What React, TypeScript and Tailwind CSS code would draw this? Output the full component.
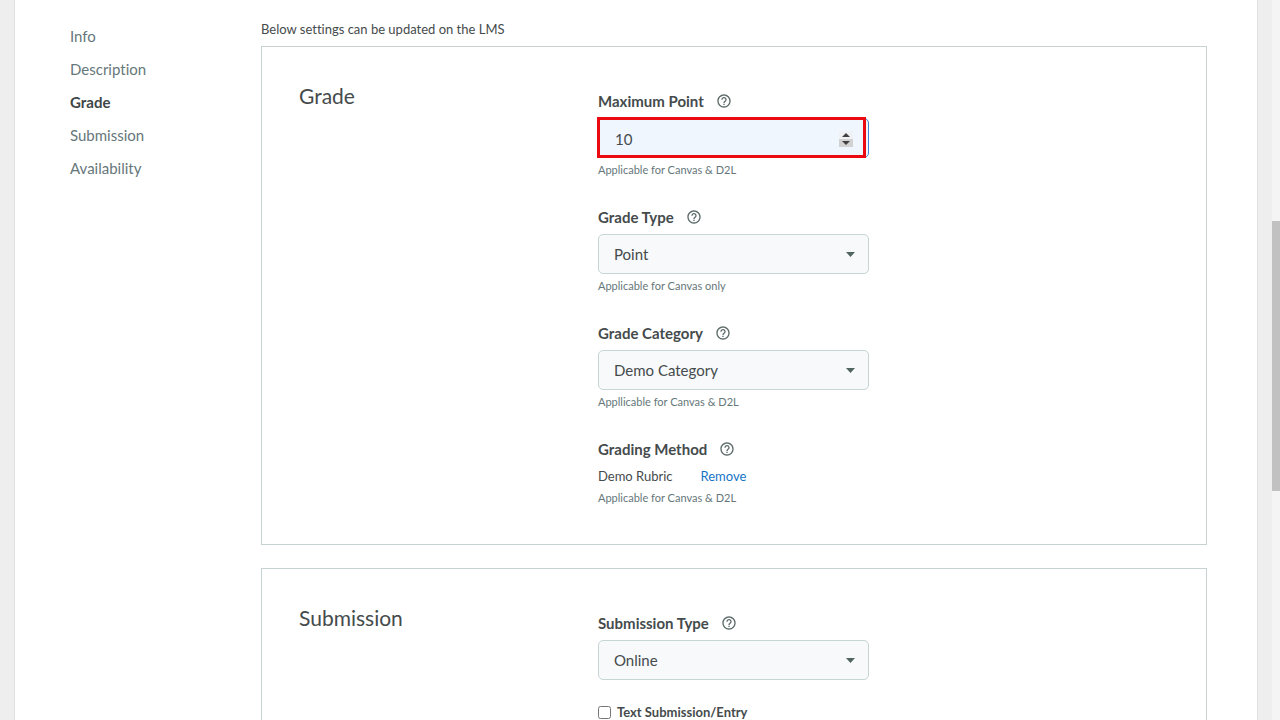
import { useState } from "react";
import type { ReactNode } from "react";
import { MdHelpOutline } from "react-icons/md";

const navItems = ["Info", "Description", "Grade", "Submission", "Availability"];

function FieldLabel({ htmlFor, children }: { htmlFor?: string; children: ReactNode }) {
  return (
    <div className="flex h-5 items-center gap-3">
      {htmlFor ? (
        <label htmlFor={htmlFor} className="text-[15px] leading-5 font-bold">
          {children}
        </label>
      ) : (
        <span className="text-[15px] leading-5 font-bold">{children}</span>
      )}
      <button type="button" aria-label="Help" className="text-[#5c6b69]">
        <MdHelpOutline size={16} />
      </button>
    </div>
  );
}

function Hint({ children }: { children: ReactNode }) {
  return <p className="mt-1 text-[11px] leading-4 text-[#66777a]">{children}</p>;
}

function SelectField({ id, label, value, hint }: { id: string; label: string; value: string; hint?: string }) {
  return (
    <div>
      <FieldLabel htmlFor={id}>{label}</FieldLabel>
      <div className="relative mt-[7px] w-[271px]">
        <select
          id={id}
          className="block h-10 w-full appearance-none rounded-[5px] border border-[#c7d6d4] bg-[#f7f9fb] pr-8 pl-[15px] text-[15px] text-[#454b4c]"
        >
          <option>{value}</option>
        </select>
        <svg
          className="pointer-events-none absolute top-[18px] right-3.5 h-[5px] w-[9px] fill-[#506461]"
          viewBox="0 0 9 5"
          aria-hidden="true"
        >
          <path d="M0 0h9L4.5 5z" />
        </svg>
      </div>
      {hint && <Hint>{hint}</Hint>}
    </div>
  );
}

function MaximumPoint() {
  const [points, setPoints] = useState(10);
  return (
    <div>
      <FieldLabel htmlFor="points">Maximum Point</FieldLabel>
      <div className="relative mt-[7px] w-[271px]">
        <input
          id="points"
          type="number"
          value={points}
          onChange={(e) => setPoints(Number(e.target.value))}
          className="block h-10 w-full [appearance:textfield] rounded-[5px] border border-[#3f86d0] bg-[#eff6fe] pt-0.5 pr-10 pl-4 text-[15px] text-[#454b4c] outline-none"
        />
        <div className="absolute top-[13px] right-4 flex w-3.5 flex-col">
          <button
            type="button"
            aria-label="Increase"
            onClick={() => setPoints(points + 1)}
            className="flex h-2 items-center justify-center bg-[#eff1f4]"
          >
            <svg className="h-1 w-2 fill-[#404040]" viewBox="0 0 8 4">
              <path d="M0 4h8L4 0z" />
            </svg>
          </button>
          <button
            type="button"
            aria-label="Decrease"
            onClick={() => setPoints(points - 1)}
            className="flex h-2 items-center justify-center bg-[#d2d2d2]"
          >
            <svg className="h-1 w-2 fill-[#404040]" viewBox="0 0 8 4">
              <path d="M0 0h8L4 4z" />
            </svg>
          </button>
        </div>
        <div className="pointer-events-none absolute -top-px right-[3px] bottom-0 -left-px border-3 border-[#ea0a10]" />
      </div>
      <Hint>Applicable for Canvas &amp; D2L</Hint>
    </div>
  );
}

function Card({ title, children }: { title: string; children: ReactNode }) {
  return (
    <section className="flex border border-[#c7d3d3] pt-11 pb-[38px] pl-[37px]">
      <h2 className="-mt-2.5 w-[299px] shrink-0 text-[21px] leading-[30px]">{title}</h2>
      <div className="flex min-w-0 flex-1 flex-col gap-[29px]">{children}</div>
    </section>
  );
}

export default function App() {
  return (
    <div className="flex h-screen overflow-hidden bg-[#eeeeee] font-['Lato',sans-serif] text-[#454b4c] [font-variant-ligatures:none]">
      <div className="mr-3.5 ml-3.5 flex min-w-0 flex-1 items-start border-x border-[#e2e2e2] bg-white pr-[50px] pl-[55px]">
        <nav className="w-[191px] shrink-0 pt-5">
          <ul>
            {navItems.map((item) => (
              <li key={item} className="h-[33px]">
                <a
                  href={`#${item.toLowerCase()}`}
                  className={
                    item === "Grade"
                      ? "text-[15px] leading-[33px] font-bold text-[#3e4647]"
                      : "text-[15px] leading-[33px] text-[#66777a]"
                  }
                >
                  {item}
                </a>
              </li>
            ))}
          </ul>
        </nav>
        <main className="min-w-0 flex-1 pt-[19px]">
          <p className="mb-[7px] text-[13px] leading-5">Below settings can be updated on the LMS</p>
          <div className="flex flex-col gap-[23px]">
            <Card title="Grade">
              <MaximumPoint />
              <SelectField id="grade-type" label="Grade Type" value="Point" hint="Applicable for Canvas only" />
              <SelectField
                id="grade-category"
                label="Grade Category"
                value="Demo Category"
                hint="Appllicable for Canvas & D2L"
              />
              <div>
                <FieldLabel>Grading Method</FieldLabel>
                <div className="mt-[7px] flex gap-7 text-[13px] leading-5">
                  <span>Demo Rubric</span>
                  <button type="button" className="text-[#1674c6]">
                    Remove
                  </button>
                </div>
                <Hint>Applicable for Canvas &amp; D2L</Hint>
              </div>
            </Card>
            <Card title="Submission">
              <SelectField id="submission-type" label="Submission Type" value="Online" />
              <div className="-mt-[7px] flex h-5 items-center gap-1.5">
                <input id="text-entry" type="checkbox" className="m-0 size-[13px]" />
                <label htmlFor="text-entry" className="text-[13px] leading-5 font-bold">
                  Text Submission/Entry
                </label>
              </div>
            </Card>
          </div>
        </main>
      </div>
      <div className="h-full w-2 shrink-0 bg-[#f4f4f4] pt-[221px]" aria-hidden="true">
        <div className="h-[270px] bg-[#c1c1c1]" />
      </div>
    </div>
  );
}
